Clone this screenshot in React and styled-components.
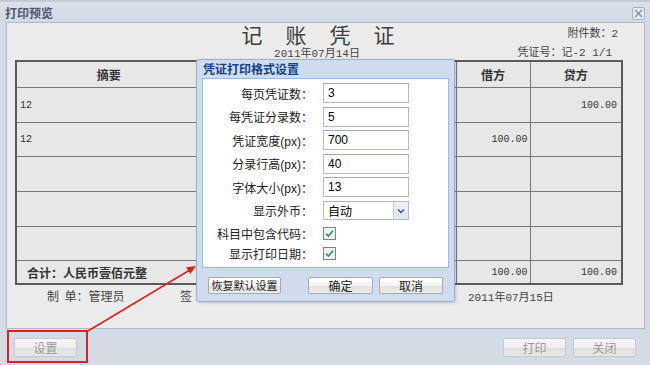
import React from 'react'
import styled, { createGlobalStyle } from 'styled-components'

const GlobalStyle = createGlobalStyle`
  html, body {
    margin: 0;
    padding: 0;
    overflow: hidden;
    background: #d3dbe5;
  }
  body {
    font-family: "Liberation Sans", "Noto Sans CJK SC", sans-serif;
    font-size: 12px;
  }
`

const Page = styled.div`
  position: relative;
  width: 650px;
  height: 365px;
  display: flex;
  flex-direction: column;
  background: #d3dbe5;
  overflow: hidden;
`

const TopStrip = styled.div`
  height: 3px;
  background: #c3cad3;
  border-bottom: 1px solid #dde3ea;
  box-sizing: border-box;
`

const TitleBar = styled.div`
  height: 19px;
  display: flex;
  align-items: center;
  justify-content: space-between;
  padding: 0 5px;
  background: linear-gradient(#d9e0ea, #d1d9e4);
`

const WinTitle = styled.span`
  color: #4c5a70;
  font-weight: bold;
  font-size: 12px;
  font-family: "Noto Sans CJK SC", sans-serif;
`

const CloseBtn = styled.div`
  width: 13px;
  height: 13px;
  box-sizing: border-box;
  border: 1px solid #a5b3c6;
  border-radius: 2px;
  background: #e4e9f0;
  display: flex;
  align-items: center;
  justify-content: center;
  margin-top: 1px;
`

const Body = styled.div`
  flex: 1;
  margin: 0 5px 0 6px;
  background: #ebebeb;
  border: 1px solid #b0bbc9;
  padding-left: 8px;
  color: #3a3a3a;
`

const VoucherHead = styled.div`
  width: 606px;
  display: grid;
  grid-template-columns: 1fr auto 1fr;
  grid-template-rows: 23px 14px;
`

const BigTitle = styled.div`
  grid-column: 2;
  grid-row: 1;
  font-family: "Noto Sans CJK SC", serif;
  font-size: 21px;
  line-height: 21px;
  letter-spacing: 23px;
  margin-right: -23px;
  margin-top: 1px;
  color: #3d3d3d;
`

const HeadInfo = styled.div`
  grid-column: 3;
  grid-row: ${p => p.$row};
  justify-self: end;
  align-self: ${p => (p.$row === 1 ? 'start' : 'end')};
  margin-right: ${p => p.$mr}px;
  padding-top: ${p => (p.$row === 1 ? 5 : 0)}px;
  font-family: "Liberation Mono", "Noto Sans CJK SC", monospace;
  font-size: 11px;
  line-height: 13px;
  color: #444;
`

const DateText = styled.div`
  grid-column: 2;
  grid-row: 2;
  justify-self: center;
  align-self: end;
  margin-left: -2px;
  font-family: "Liberation Mono", "Noto Sans CJK SC", monospace;
  font-size: 11px;
  line-height: 12px;
  color: #444;
`

const Table = styled.table`
  width: 606px;
  border-collapse: collapse;
  table-layout: fixed;
  border: 2px solid #5a5a5a;
  background: #e7e7e7;
`

const Th = styled.th`
  height: 23px;
  border: 1px solid #787878;
  font-family: "Noto Sans CJK SC", sans-serif;
  font-size: 12px;
  font-weight: bold;
  color: #333;
`

const Td = styled.td`
  height: ${p => p.$h}px;
  border: 1px solid #787878;
  padding: 0 ${p => p.$pr || 4}px 0 ${p => p.$pl || 4}px;
  text-align: ${p => p.$align || 'left'};
  font-family: "Liberation Mono", "Noto Sans CJK SC", monospace;
  font-size: 10px;
  color: #333;
`

const TotalCell = styled(Td)`
  font-family: "Noto Sans CJK SC", sans-serif;
  font-size: 12px;
  font-weight: bold;
  color: #333;
`

const SignRow = styled.div`
  display: flex;
  margin-top: 4px;
  padding-left: 32px;
  font-family: "Noto Sans CJK SC", sans-serif;
  font-size: 12px;
  line-height: 14px;
  color: #444;
`

const SignItem = styled.div`
  width: ${p => (p.$w ? `${p.$w}px` : 'auto')};
  white-space: pre;
`

const Mono = styled.span`
  font-family: "Liberation Mono", "Noto Sans CJK SC", monospace;
  font-size: 11px;
`

const Footer = styled.div`
  height: 36px;
  display: flex;
  justify-content: space-between;
  align-items: flex-start;
  padding: 9px 14px 0;
  box-sizing: border-box;
`

const ButtonGroup = styled.div`
  display: flex;
  gap: 7px;
`

const BarButton = styled.div`
  width: 63px;
  height: 19px;
  box-sizing: border-box;
  border: 1px solid #c6cacf;
  border-radius: 2px;
  background: linear-gradient(#f5f5f5 0%, #eeeeee 50%, #e0e0e0 51%, #e6e6e6 100%);
  color: #9a9a9a;
  font-family: "Noto Sans CJK SC", sans-serif;
  font-size: 12px;
  line-height: 17px;
  text-align: center;
`

const Dialog = styled.div`
  position: absolute;
  left: 196px;
  top: 59px;
  width: 259px;
  height: 243px;
  box-sizing: border-box;
  background: #cedcee;
  border: 1px solid #98b0cf;
  border-radius: 3px;
  box-shadow: 1px 1px 3px rgba(0, 0, 0, 0.18);
  padding: 0 5px;
  display: flex;
  flex-direction: column;
`

const DialogTitle = styled.div`
  height: 18px;
  line-height: 18px;
  padding-left: 1px;
  font-family: "Noto Sans CJK SC", sans-serif;
  font-weight: bold;
  font-size: 12px;
  color: #15428b;
`

const Panel = styled.div`
  height: 190px;
  box-sizing: border-box;
  background: #fff;
  border: 1px solid #99bbe8;
  padding-top: 4px;
  display: flex;
  flex-direction: column;
  gap: 3.6px;
`

const FormRow = styled.div`
  height: ${p => p.$h}px;
  display: grid;
  grid-template-columns: 110px 86px;
  column-gap: 10px;
  align-items: center;
`

const Label = styled.label`
  text-align: right;
  color: #222;
  font-family: "Noto Sans CJK SC", sans-serif;
  font-size: 12px;
  white-space: nowrap;
`

const Px = styled.span`
  font-family: "Liberation Sans", sans-serif;
`

const Input = styled.input`
  width: 86px;
  height: 20px;
  box-sizing: border-box;
  border: 1px solid #b5b8c8;
  border-top-color: #a4a8b8;
  padding: 0 4px;
  font-family: "Liberation Sans", sans-serif;
  font-size: 12px;
  color: #000;
  background: #fff;
  outline: none;
`

const Select = styled.div`
  width: 86px;
  height: 19px;
  box-sizing: border-box;
  border: 1px solid #b5b8c8;
  display: flex;
  align-items: center;
  justify-content: space-between;
  padding-left: 4px;
  font-family: "Noto Sans CJK SC", sans-serif;
  font-size: 12px;
  color: #000;
`

const SelectArrow = styled.div`
  width: 14px;
  height: 17px;
  background: linear-gradient(#eef2f7, #dfe5ee);
  border-left: 1px solid #c6ccd6;
  display: flex;
  align-items: center;
  justify-content: center;
`

const ButtonRow = styled.div`
  display: flex;
  margin-top: 9px;
  padding-left: 6px;
`

const DlgButton = styled.div`
  width: ${p => p.$w}px;
  height: 17px;
  margin-left: ${p => p.$ml || 0}px;
  box-sizing: border-box;
  border: 1px solid #a9a9a9;
  border-radius: 2px;
  background: linear-gradient(#ffffff 0%, #f3f3f3 50%, #e2e2e2 51%, #ebebeb 100%);
  color: #222;
  font-family: "Noto Sans CJK SC", sans-serif;
  font-size: ${p => p.$fs || 12}px;
  line-height: 15px;
  text-align: center;
  white-space: nowrap;
  overflow: hidden;
`

const Overlay = styled.svg`
  position: absolute;
  left: 0;
  top: 0;
  pointer-events: none;
`

const Highlight = styled.div`
  position: absolute;
  left: 7px;
  top: 330px;
  width: 81px;
  height: 33px;
  box-sizing: border-box;
  border: 2px solid #e0201c;
`

const CheckBox = () => (
  <svg width="13" height="13" viewBox="0 0 13 13">
    <rect x="0.5" y="0.5" width="12" height="12" fill="#eef3fa" stroke="#7385a3" />
    <path d="M3 6.6 L5.4 9 L10 3.8" fill="none" stroke="#2f9a2f" strokeWidth="1.6" />
  </svg>
)

const rows = [
  { h: 34, desc: '12', debit: '', credit: '100.00' },
  { h: 33, desc: '12', debit: '100.00', credit: '' },
  { h: 34, desc: '', debit: '', credit: '' },
  { h: 34, desc: '', debit: '', credit: '' },
  { h: 33, desc: '', debit: '', credit: '' },
]

const fields = [
  { label: '每页凭证数：', value: '3' },
  { label: '每凭证分录数：', value: '5' },
  { label: '凭证宽度', px: true, value: '700' },
  { label: '分录行高', px: true, value: '40' },
  { label: '字体大小', px: true, value: '13' },
]

const App = () => {
  return (
    <Page>
      <GlobalStyle />
      <TopStrip />
      <TitleBar>
        <WinTitle>打印预览</WinTitle>
        <CloseBtn>
          <svg width="9" height="9" viewBox="0 0 9 9">
            <path d="M1 1 L8 8 M8 1 L1 8" stroke="#7d8fa9" strokeWidth="1.4" />
          </svg>
        </CloseBtn>
      </TitleBar>

      <Body>
        <VoucherHead>
          <BigTitle>记账凭证</BigTitle>
          <HeadInfo $row={1} $mr={3}>附件数：2</HeadInfo>
          <DateText>2011年07月14日</DateText>
          <HeadInfo $row={2} $mr={9}>凭证号：记-2 1/1</HeadInfo>
        </VoucherHead>

        <Table>
          <colgroup>
            <col style={{ width: 185 }} />
            <col style={{ width: 255 }} />
            <col style={{ width: 74 }} />
            <col style={{ width: 92 }} />
          </colgroup>
          <thead>
            <tr>
              <Th>摘要</Th>
              <Th>会计科目</Th>
              <Th>借方</Th>
              <Th>贷方</Th>
            </tr>
          </thead>
          <tbody>
            {rows.map((r, i) => (
              <tr key={i}>
                <Td $h={r.h} $pl={3}>{r.desc}</Td>
                <Td $h={r.h} />
                <Td $h={r.h} $align="right" $pr={2}>{r.debit}</Td>
                <Td $h={r.h} $align="right" $pr={4}>{r.credit}</Td>
              </tr>
            ))}
            <tr>
              <TotalCell $h={22} $pl={10} colSpan={2}>合计：人民币壹佰元整</TotalCell>
              <Td $h={22} $align="right" $pr={2}>100.00</Td>
              <Td $h={22} $align="right" $pr={4}>100.00</Td>
            </tr>
          </tbody>
        </Table>

        <SignRow>
          <SignItem $w={133}>制  单：管理员</SignItem>
          <SignItem $w={288}>签</SignItem>
          <SignItem><Mono>2011年07月15日</Mono></SignItem>
        </SignRow>
      </Body>

      <Footer>
        <BarButton>设置</BarButton>
        <ButtonGroup>
          <BarButton>打印</BarButton>
          <BarButton>关闭</BarButton>
        </ButtonGroup>
      </Footer>

      <Dialog>
        <DialogTitle>凭证打印格式设置</DialogTitle>
        <Panel>
          {fields.map(f => (
            <FormRow key={f.label} $h={20}>
              <Label>
                {f.label}
                {f.px && <Px>(px)</Px>}
                {f.px && '：'}
              </Label>
              <Input value={f.value} readOnly />
            </FormRow>
          ))}
          <FormRow $h={20}>
            <Label>显示外币：</Label>
            <Select>
              自动
              <SelectArrow>
                <svg width="8" height="6" viewBox="0 0 8 6">
                  <path d="M1 1.5 L4 4.5 L7 1.5" fill="none" stroke="#36598f" strokeWidth="1.5" />
                </svg>
              </SelectArrow>
            </Select>
          </FormRow>
          <FormRow $h={17}>
            <Label>科目中包含代码：</Label>
            <CheckBox />
          </FormRow>
          <FormRow $h={17}>
            <Label>显示打印日期：</Label>
            <CheckBox />
          </FormRow>
        </Panel>
        <ButtonRow>
          <DlgButton $w={73} $fs={11}>恢复默认设置</DlgButton>
          <DlgButton $w={65} $ml={27}>确定</DlgButton>
          <DlgButton $w={64} $ml={6}>取消</DlgButton>
        </ButtonRow>
      </Dialog>

      <Highlight />
      <Overlay width="650" height="365" viewBox="0 0 650 365">
        <line x1="88" y1="331" x2="189" y2="270.5" stroke="#e0201c" strokeWidth="1.6" />
        <polygon points="196,266 190.4,274 186.2,267.2" fill="#e0201c" />
      </Overlay>
    </Page>
  )
}

export default App
